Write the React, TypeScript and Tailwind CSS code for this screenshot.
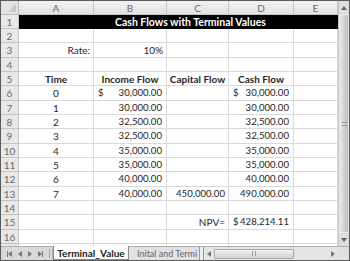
import React from "react"

const COLS = ["A", "B", "C", "D", "E"]
const colW = "grid-cols-[18px_75px_73px_62px_65px_44px]"

type Row = { a?: string; b?: string; bDollar?: boolean; c?: string; d?: string; dDollar?: boolean }

const ROWS: Record<number, Row> = {
  3: { a: "Rate:", b: "10%" },
  6: { a: "0", b: "30,000.00", bDollar: true, d: "30,000.00", dDollar: true },
  7: { a: "1", b: "30,000.00", d: "30,000.00" },
  8: { a: "2", b: "32,500.00", d: "32,500.00" },
  9: { a: "3", b: "32,500.00", d: "32,500.00" },
  10: { a: "4", b: "35,000.00", d: "35,000.00" },
  11: { a: "5", b: "35,000.00", d: "35,000.00" },
  12: { a: "6", b: "40,000.00", d: "40,000.00" },
  13: { a: "7", b: "40,000.00", c: "450,000.00", d: "490,000.00" },
  15: { c: "NPV=", d: "428,214.11", dDollar: true },
}

const rowH = (n: number) => (n % 3 === 0 ? "h-[15px]" : "h-[14px]")
const cell = "border-r border-b border-[#dadada] flex items-center overflow-hidden whitespace-nowrap"

function Money({ value, dollar }: { value?: string; dollar?: boolean }) {
  return (
    <div className={cell + " justify-between pl-[4px] pr-[4px] text-[9.6px]"}>
      <span>{dollar ? "$" : ""}</span>
      <span>{value}</span>
    </div>
  )
}

function Tri({ dir }: { dir: "l" | "r" }) {
  return dir === "l"
    ? <div className="w-0 h-0 border-t-[3px] border-b-[3px] border-r-[4px] border-t-transparent border-b-transparent border-r-[#777]" />
    : <div className="w-0 h-0 border-t-[3px] border-b-[3px] border-l-[4px] border-t-transparent border-b-transparent border-l-[#777]" />
}

export default function App() {
  return (
    <div className="w-[350px] h-[261px] overflow-hidden border border-[#5a5a5a] bg-white text-[#262626] text-[10px] leading-none flex flex-col" style={{ fontFamily: "Lato, 'Liberation Sans', sans-serif" }}>
      <div className="flex flex-1 min-h-0">
        <div className={"grid content-start " + colW}>
          {/* column headers */}
          <div className="h-[14px] bg-[#e4e4e4] border-r border-b border-[#b8b8b8] relative">
            <div className="absolute right-[2px] bottom-[2px] w-0 h-0 border-l-[8px] border-l-transparent border-b-[8px] border-b-[#c8c8c8]" />
          </div>
          {COLS.map(c => (
            <div key={c} className="h-[14px] bg-gradient-to-b from-[#f2f2f2] to-[#e2e2e2] border-r border-b border-[#c4c4c4] flex items-center justify-center text-[#6a6a6a]">{c}</div>
          ))}

          {Array.from({ length: 17 }, (_, i) => i + 1).map(n => {
            const r = ROWS[n] || {}
            const h = rowH(n)
            return (
              <React.Fragment key={n}>
                <div className={h + " bg-[#e8e8e8] border-r border-b border-[#c4c4c4] flex items-center justify-center text-[#6a6a6a]"}>{n}</div>
                {n === 1 ? (
                  <div className={h + " col-span-5 bg-black text-white font-bold text-[10.5px] flex items-center pl-[96px]"}>Cash Flows with Terminal Values</div>
                ) : n === 5 ? (
                  <>
                    <div className={h + " " + cell + " justify-center font-bold"}>Time</div>
                    <div className={h + " " + cell + " justify-center font-bold"}>Income Flow</div>
                    <div className={h + " " + cell + " justify-center font-bold"}>Capital Flow</div>
                    <div className={h + " " + cell + " justify-center font-bold"}>Cash Flow</div>
                    <div className={h + " " + cell} />
                  </>
                ) : (
                  <>
                    <div className={h + " " + cell + (n === 3 ? " justify-end pr-[3px]" : " justify-center")}>{r.a}</div>
                    <div className={h + " grid"}>{n === 3 ? <div className={cell + " justify-end pr-[3px]"}>{r.b}</div> : <Money value={r.b} dollar={r.bDollar} />}</div>
                    <div className={h + " " + cell + " justify-end pr-[3px]" + (n === 13 ? " text-[9.6px]" : "")}>{r.c}</div>
                    <div className={h + " grid"}><Money value={r.d} dollar={r.dDollar} /></div>
                    <div className={h + " " + cell} />
                  </>
                )}
              </React.Fragment>
            )
          })}
        </div>

        {/* vertical scrollbar */}
        <div className="w-[11px] bg-[#e6e6e6] border-l border-[#c8c8c8] flex flex-col">
          <div className="h-[13px] flex items-center justify-center bg-[#dedede]">
            <div className="w-0 h-0 border-l-[3px] border-r-[3px] border-b-[4px] border-l-transparent border-r-transparent border-b-[#666]" />
          </div>
          <div className="flex-1 m-[1px] bg-gradient-to-r from-[#e9e9e9] via-[#d2d2d2] to-[#bcbcbc] rounded-[1px] flex items-center justify-center">
            <div className="w-[5px] h-[4px] border-y border-[#999]" />
          </div>
          <div className="h-[13px] flex items-center justify-center bg-[#dedede]">
            <div className="w-0 h-0 border-l-[3px] border-r-[3px] border-t-[4px] border-l-transparent border-r-transparent border-t-[#666]" />
          </div>
        </div>
      </div>

      {/* sheet tabs + horizontal scrollbar */}
      <div className="h-[14px] shrink-0 bg-[#d9d9d9] border-t border-[#b0b0b0] flex items-stretch text-[10px]">
        <div className="w-[48px] flex items-center justify-around px-[3px]">
          <div className="flex items-center"><div className="w-px h-[6px] bg-[#777]" /><Tri dir="l" /></div>
          <Tri dir="l" />
          <Tri dir="r" />
          <div className="flex items-center"><Tri dir="r" /><div className="w-px h-[6px] bg-[#777]" /></div>
        </div>
        <div className="w-[4px] border-x border-[#aaa] my-[2px]" />
        <div className="w-[76px] bg-white border-x border-b border-[#888] flex items-center justify-center font-bold text-[#222] -mt-px">Terminal_Value</div>
        <div className="bg-[#e2e2e2] border-r border-[#999] flex items-center pl-[8px] pr-[2px] text-[#666] text-[9px] whitespace-nowrap">Inital and Termi</div>
        <div className="w-[4px] bg-[#eee] border-r border-[#999]" />
        <div className="flex-1 flex items-center bg-[#e4e4e4]">
          <div className="w-[10px] flex items-center justify-center"><Tri dir="l" /></div>
          <div className="w-[80px] h-[10px] bg-gradient-to-b from-[#f4f4f4] to-[#d0d0d0] border border-[#aaa] rounded-[1px] flex items-center justify-center">
            <div className="w-[4px] h-[5px] border-x border-[#999]" />
          </div>
          <div className="flex-1" />
          <div className="w-[10px] flex items-center justify-center"><Tri dir="r" /></div>
        </div>
        <div className="w-[11px] bg-[#e0e0e0]" />
      </div>
    </div>
  )
}
